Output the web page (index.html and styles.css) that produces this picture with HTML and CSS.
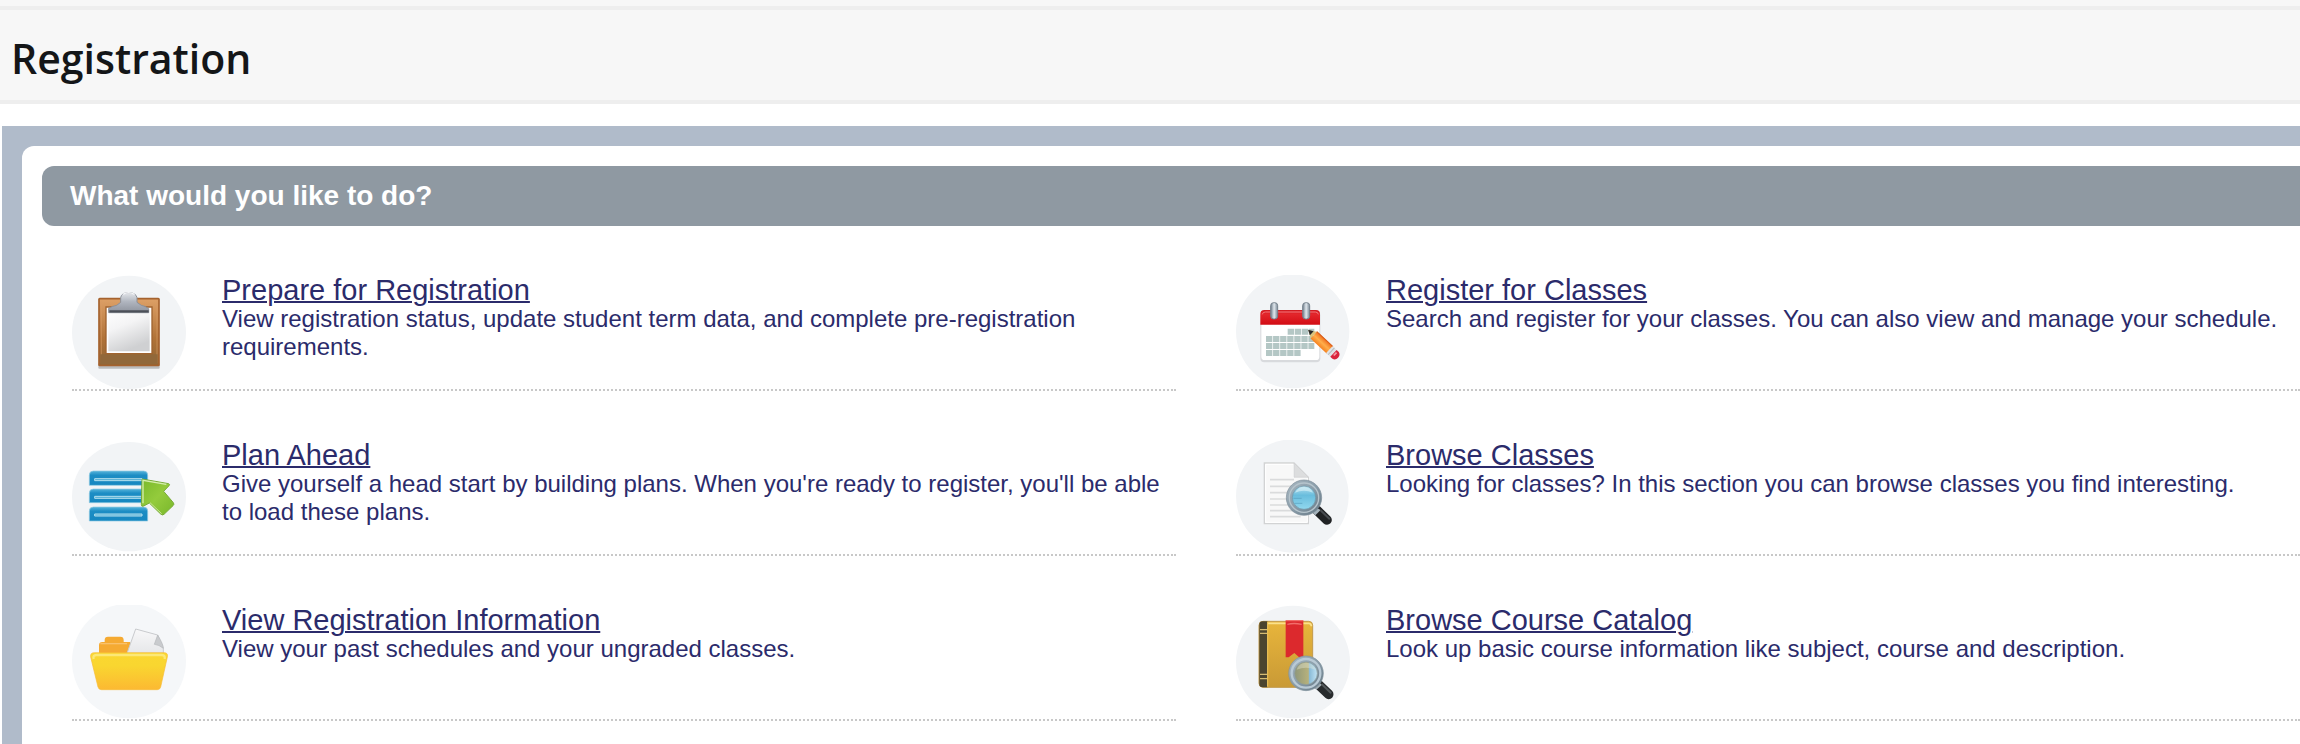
FILE: index.html
```
<!DOCTYPE html>
<html lang="en">
<head>
  <meta charset="UTF-8" />
  <meta name="viewport" content="width=device-width, initial-scale=1.0"/>
  <title>Registration</title>
  <link rel="stylesheet" href="styles.css">
</head>
<body>
  <div class="top-strip"></div>
  <header class="page-header">
    <h1>Registration</h1>
  </header>

  <main class="panel">
    <div class="panel-body">
      <h2 class="panel-title">What would you like to do?</h2>

      <ul class="menu">
        <li class="menu-item">
          <!-- clipboard -->
          <svg class="icon" viewBox="36 45 342 342" aria-hidden="true">
            <defs>
              <linearGradient id="wood" x1="0" y1="0" x2="0" y2="1"><stop offset="0" stop-color="#dda066"/><stop offset=".6" stop-color="#b07237"/><stop offset="1" stop-color="#8f6535"/></linearGradient>
              <linearGradient id="sheet" x1="0" y1="0" x2=".4" y2="1"><stop offset="0" stop-color="#fff"/><stop offset=".45" stop-color="#f4f4f5"/><stop offset="1" stop-color="#cfd0d2"/></linearGradient>
              <linearGradient id="clip" x1="0" y1="0" x2="0" y2="1"><stop offset="0" stop-color="#e4e6ea"/><stop offset=".45" stop-color="#b0b5bf"/><stop offset="1" stop-color="#8d929c"/></linearGradient>
            </defs>
            <ellipse cx="207" cy="217" rx="171" ry="170" fill="#f2f4f6"/>
            <rect x="115" y="310" width="184" height="16" rx="3" fill="#777" opacity=".45"/>
            <rect x="117" y="116" width="180" height="200" rx="2" fill="url(#wood)" stroke="#a5622e" stroke-width="5"/>
            <path d="M124 122v188M291 122v188" stroke="#d99c66" stroke-width="3" opacity=".6"/>
            <path d="M121 283h172v30H121z" fill="#91683a"/>
            <path d="M138 141h138v140H138z" fill="#fff" stroke="#a0632f" stroke-width="4"/>
            <path d="M145 148h124v126H145z" fill="url(#sheet)"/>
            <path d="M146 158v-13q12-7 24-9l12-9v-14q2-15 24-15t25 15v14l13 9q12 2 22 10v12z" fill="url(#clip)" stroke="#8b9099" stroke-width="3"/>
            <path d="M148 154h118" stroke="#4c5058" stroke-width="7"/>
            <path d="M188 103q18-10 36 0" fill="none" stroke="#f4f5f7" stroke-width="4"/>
          </svg>
          <div class="menu-text">
            <a href="#">Prepare for Registration</a>
            <p>View registration status, update student term data, and complete pre-registration requirements.</p>
          </div>
        </li>

        <li class="menu-item">
          <!-- calendar and pencil -->
          <svg class="icon" viewBox="33 45 342 342" aria-hidden="true">
            <defs>
              <linearGradient id="red" x1="0" y1="0" x2="0" y2="1"><stop offset="0" stop-color="#cf1a20"/><stop offset=".3" stop-color="#e3262b"/><stop offset="1" stop-color="#d20c14"/></linearGradient>
              <linearGradient id="ring" x1="0" y1="0" x2="1" y2="0"><stop offset="0" stop-color="#6f7d8a"/><stop offset=".5" stop-color="#e0e7ed"/><stop offset="1" stop-color="#7b8996"/></linearGradient>
              <linearGradient id="pencil" x1="0" y1="0" x2="0" y2="1"><stop offset="0" stop-color="#f0701e"/><stop offset=".5" stop-color="#ffae4b"/><stop offset="1" stop-color="#f58220"/></linearGradient>
            </defs>
            <ellipse cx="203" cy="214" rx="170" ry="171" fill="#f2f4f6"/>
            <rect x="106" y="154" width="180" height="153" rx="12" fill="#d8dadd"/>
            <rect x="109" y="152" width="174" height="148" rx="10" fill="#fff"/>
            <path d="M106 194v-32q0-12 12-12h155q12 0 12 12v32z" fill="url(#red)"/>
            <path d="M112 163q1-7 9-7h150q8 0 9 7" fill="none" stroke="#f4777a" stroke-width="3"/>
            <rect x="137" y="128" width="21" height="49" rx="9" fill="url(#ring)" stroke="#75818c" stroke-width="3"/>
            <rect x="233" y="128" width="21" height="49" rx="9" fill="url(#ring)" stroke="#75818c" stroke-width="3"/>
            <g stroke="#b4c7c5" stroke-width="18" stroke-dasharray="19 2.200">
              <path d="M188 215h80"/>
              <path d="M123 237h145"/>
              <path d="M123 258h145"/>
              <path d="M123 279h104"/>
            </g>
            <g transform="translate(250 210) rotate(43)">
              <path d="M0 0L22-13V13z" fill="#d9c37d"/>
              <path d="M-1 0L14-8V8z" fill="#292929"/>
              <path d="M22-14H88V14H22z" fill="url(#pencil)"/>
              <path d="M22-14H88" stroke="#d75b17" stroke-width="3"/>
              <path d="M86-14h18v28H86z" fill="#e0e3e6"/>
              <path d="M94-14v28" stroke="#b3b9bd" stroke-width="3"/>
              <path d="M103-14h9q10 3 10 14t-10 14h-9z" fill="#d9243d"/>
              <path d="M108-8v12" stroke="#f498a3" stroke-width="5"/>
            </g>
          </svg>
          <div class="menu-text">
            <a href="#">Register for Classes</a>
            <p>Search and register for your classes. You can also view and manage your schedule.</p>
          </div>
        </li>

        <li class="menu-item">
          <!-- list and green arrow -->
          <svg class="icon" viewBox="36 45 342 342" aria-hidden="true">
            <defs>
              <linearGradient id="bar" x1="0" y1="0" x2="0" y2="1"><stop offset="0" stop-color="#55b3da"/><stop offset=".3" stop-color="#1c8dc4"/><stop offset="1" stop-color="#1687c0"/></linearGradient>
              <linearGradient id="green" x1="0" y1="0" x2="1" y2="1"><stop offset="0" stop-color="#79b92b"/><stop offset=".5" stop-color="#94cb3c"/><stop offset="1" stop-color="#78b72b"/></linearGradient>
            </defs>
            <ellipse cx="207" cy="215" rx="171" ry="164" fill="#f2f4f6"/>
            <g fill="url(#bar)" stroke="#8fcae2" stroke-width="2">
              <path d="M88 181v-31q0-12 12-12h151q12 0 12 12v31z"/>
              <path d="M88 233v-29q0-12 12-12h151q12 0 12 12v29z"/>
              <path d="M88 288v-30q0-12 12-12h151q12 0 12 12v30z"/>
            </g>
            <g fill="#4eacd3" stroke="#b5e0ee" stroke-width="3">
              <path d="M104 161h142v6H104z"/>
              <path d="M104 214h142v6H104z"/>
              <path d="M104 267h142v6H104z"/>
            </g>
            <path d="M246 162l80 14q5 2 1 6l-16 17 29 34q4 5-1 9l-27 26q-5 4-10-1l-34-33-17 9q-7 3-7-4z" fill="url(#green)" stroke="#79ac39" stroke-width="3"/>
            <path d="M249 235v-69l70 12" fill="none" stroke="#d5eeae" stroke-width="4"/>
            <path d="M270 233l35 33" stroke="#c7e595" stroke-width="3"/>
          </svg>
          <div class="menu-text">
            <a href="#">Plan Ahead</a>
            <p>Give yourself a head start by building plans. When you're ready to register, you'll be able to load these plans.</p>
          </div>
        </li>

        <li class="menu-item">
          <!-- document and magnifier -->
          <svg class="icon" viewBox="33 45 342 342" aria-hidden="true">
            <defs>
              <linearGradient id="frame" x1="0" y1="0" x2="1" y2="1"><stop offset="0" stop-color="#a9b8c2"/><stop offset=".5" stop-color="#8a9daa"/><stop offset="1" stop-color="#647682"/></linearGradient>
              <linearGradient id="lens" x1="0" y1="0" x2="0" y2="1"><stop offset="0" stop-color="#b6e0ef"/><stop offset=".4" stop-color="#69bddd"/><stop offset="1" stop-color="#91d8ee"/></linearGradient>
            </defs>
            <ellipse cx="202" cy="213" rx="169" ry="170" fill="#f2f4f6"/>
            <path d="M118 114h89l43 43v139H118z" fill="#f8f8f8" stroke="#d2d3d4" stroke-width="4"/>
            <path d="M122 118h84v40h41v134H122z" fill="none" stroke="#fff" stroke-width="3"/>
            <path d="M207 114l43 43h-43z" fill="#dcddde" stroke="#cfd0d1" stroke-width="2"/>
            <path d="M135 164h72M135 184h72M135 203h72M135 222h72M135 240h72M135 257h72M135 275h92" stroke="#dadbdc" stroke-width="5"/>
            <path d="M276 256L306 285" stroke="#202224" stroke-width="29" stroke-linecap="round"/>
            <path d="M269 246l-11 12 13 13 16-16z" fill="#a5b3bc"/>
            <path d="M288 257l25 24" stroke="#484c50" stroke-width="6" stroke-linecap="round"/>
            <circle cx="237" cy="218" r="53" fill="url(#frame)" stroke="#7c8d98" stroke-width="2"/>
            <circle cx="237" cy="218" r="44" fill="none" stroke="#b6c4cc" stroke-width="4"/>
            <circle cx="237" cy="218" r="35" fill="url(#lens)" stroke="#6f94a5" stroke-width="2"/>
            <path d="M205 220h25M209 235h23" stroke="#519bbb" stroke-width="3" opacity=".6"/>
            <path d="M210 203q9-18 28-17t26 17q-27-11-54 0z" fill="#def3f8" opacity=".6"/>
          </svg>
          <div class="menu-text">
            <a href="#">Browse Classes</a>
            <p>Looking for classes? In this section you can browse classes you find interesting.</p>
          </div>
        </li>

        <li class="menu-item">
          <!-- folder -->
          <svg class="icon" viewBox="36 45 342 342" aria-hidden="true">
            <defs>
              <linearGradient id="folder" x1="0" y1="0" x2="0" y2="1"><stop offset="0" stop-color="#fad730"/><stop offset=".35" stop-color="#f9d630"/><stop offset="1" stop-color="#fcb932"/></linearGradient>
              <linearGradient id="page" x1="0" y1="0" x2="0" y2="1"><stop offset="0" stop-color="#f8f8f9"/><stop offset="1" stop-color="#e6e7e9"/></linearGradient>
            </defs>
            <ellipse cx="207" cy="213" rx="171" ry="172" fill="#f5f7f9"/>
            <path d="M117 195v-29q0-10 10-10h7v-6q0-10 10-10h37q10 0 10 10v6h20v39z" fill="#f5aa32"/>
            <path d="M121 161h80" stroke="#f9c16b" stroke-width="4"/>
            <path d="M201 190l26-73 66 18 17 40v15z" fill="url(#page)" stroke="#c9cbce" stroke-width="3"/>
            <path d="M293 135l-10 28q14 1 27 12 1-10-17-40z" fill="#c9cbce" stroke="#b5b8bb" stroke-width="2"/>
            <path d="M92 201q-2-13 11-13h209q13 0 10 13l-20 90q-2 8-10 8H124q-8 0-10-8z" fill="url(#folder)" stroke="#f7bd35" stroke-width="2"/>
            <path d="M101 207q-3-12 8-12h197q10 0 8 12" fill="none" stroke="#fcec88" stroke-width="7" opacity=".8"/>
          </svg>
          <div class="menu-text">
            <a href="#">View Registration Information</a>
            <p>View your past schedules and your ungraded classes.</p>
          </div>
        </li>

        <li class="menu-item">
          <!-- book and magnifier -->
          <svg class="icon" viewBox="33 45 342 342" aria-hidden="true">
            <defs>
              <linearGradient id="cover" x1="0" y1="0" x2="0" y2="1"><stop offset="0" stop-color="#e8b53b"/><stop offset="1" stop-color="#c99a36"/></linearGradient>
              <linearGradient id="glass" x1="0" y1="0" x2="1" y2="0"><stop offset="0" stop-color="#8f9779"/><stop offset=".6" stop-color="#b6b17c"/><stop offset=".65" stop-color="#8abbd7"/><stop offset="1" stop-color="#c2e4f5"/></linearGradient>
            </defs>
            <ellipse cx="204" cy="216" rx="171" ry="169" fill="#f2f4f6"/>
            <rect x="102" y="94" width="161" height="198" rx="12" fill="url(#cover)" stroke="#c29a4b" stroke-width="3"/>
            <path d="M129 100h122q8 0 8 9" fill="none" stroke="#fbe18b" stroke-width="5"/>
            <path d="M127 94h-14q-10 0-10 10v178q0 10 10 10h14z" fill="#4b442f"/>
            <path d="M105 119h22M105 130h22M105 253h22M105 266h22" stroke="#d5bb72" stroke-width="4"/>
            <path d="M128 96v194" stroke="#f1c65b" stroke-width="3"/>
            <path d="M182 92h53v112h-10l-17-15-17 13h-9z" fill="#dc292d"/>
            <path d="M182 92h53M187 103q20-5 43 0" fill="none" stroke="#f26d6a" stroke-width="4"/>
            <path d="M281 284L311 313" stroke="#282b2d" stroke-width="29" stroke-linecap="round"/>
            <path d="M276 275l-14 14 12 10 17-15z" fill="#a5b0b6"/>
            <path d="M292 284l25 24" stroke="#53585a" stroke-width="6" stroke-linecap="round"/>
            <circle cx="243" cy="250" r="52" fill="url(#frame)" stroke="#81929d" stroke-width="2"/>
            <circle cx="243" cy="250" r="43" fill="none" stroke="#b9cad5" stroke-width="7"/>
            <circle cx="243" cy="250" r="34" fill="url(#glass)" stroke="#8c9b9a" stroke-width="2"/>
            <path d="M215 239q7-21 28-21t28 21q-28-12-56 0z" fill="#e5e9d8" opacity=".4"/>
          </svg>
          <div class="menu-text">
            <a href="#">Browse Course Catalog</a>
            <p>Look up basic course information like subject, course and description.</p>
          </div>
        </li>
      </ul>
    </div>
  </main>
</body>
</html>
```
FILE: styles.css
```
* {
  box-sizing: border-box;
  margin: 0;
  padding: 0;
}

body {
  display: flex;
  flex-direction: column;
  min-height: 100vh;
  background-color: #fff;
  color: #2b2b6b;
  font-family: "Liberation Sans", Arial, sans-serif;
}

.top-strip {
  height: 6px;
  background-color: #f7f7f7;
}

.page-header {
  padding: 20px 11px 14px;
  background-color: #f7f7f7;
  border-top: 4px solid #eee;
  border-bottom: 4px solid #eee;
}

.page-header h1 {
  color: #141618;
  font-family: "Open Sans", sans-serif;
  font-size: 41px;
  font-weight: 600;
  line-height: 56px;
}

.panel {
  display: flex;
  flex: 1;
  margin: 22px 0 0 2px;
  padding: 20px 0 0 20px;
  background-color: #b0bbca;
}

.panel-body {
  flex: 1;
  padding: 20px 0 0 20px;
  background-color: #fff;
  border-top-left-radius: 12px;
}

.panel-title {
  padding: 0 28px;
  background-color: #8f99a2;
  border-radius: 12px 0 0 12px;
  color: #fff;
  font-size: 28px;
  line-height: 60px;
}

.menu {
  display: grid;
  grid-template-columns: 138fr 133fr;
  column-gap: 60px;
  padding-left: 30px;
  list-style: none;
}

.menu-item {
  display: flex;
  gap: 36px;
  padding-top: 49px;
  border-bottom: 2px dotted #c8c8c8;
}

.icon {
  flex: none;
  width: 114px;
  height: 114px;
}

.menu-text a {
  display: block;
  width: fit-content;
  color: inherit;
  font-size: 29px;
  line-height: 30px;
  text-decoration-thickness: 2px;
}

.menu-text p {
  font-size: 24px;
  line-height: 28px;
}

@media (max-width: 900px) {
  .menu {
    grid-template-columns: 1fr;
    padding-right: 20px;
  }
}
```
